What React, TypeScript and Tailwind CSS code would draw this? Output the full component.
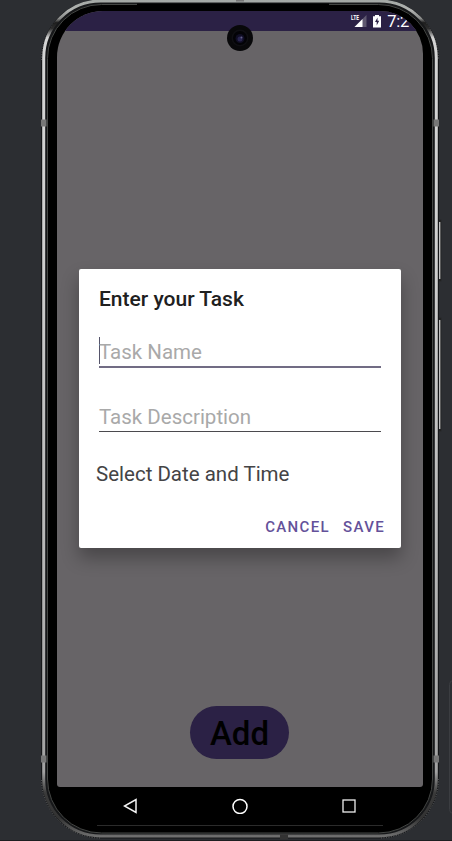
function DeviceFrame() {
  return (
    <svg className="absolute inset-0" width="452" height="841" viewBox="0 0 452 841" fill="none">
      <defs>
        <linearGradient id="rim" x1="0" y1="0" x2="0" y2="839" gradientUnits="userSpaceOnUse">
          <stop offset="0" stopColor="#a3a8a5" />
          <stop offset="0.012" stopColor="#b0b2b0" />
          <stop offset="0.022" stopColor="#8a8b8a" />
          <stop offset="0.027" stopColor="#1e1e1e" />
          <stop offset="0.034" stopColor="#2e2e2e" />
          <stop offset="0.045" stopColor="#d4d4d4" />
          <stop offset="0.3" stopColor="#cfcfcf" />
          <stop offset="0.65" stopColor="#b8b8b8" />
          <stop offset="0.92" stopColor="#a2a2a2" />
          <stop offset="0.945" stopColor="#3a3a3a" />
          <stop offset="0.975" stopColor="#333333" />
          <stop offset="1" stopColor="#777777" />
        </linearGradient>
      </defs>
      <rect x="41" y="-0.5" width="398" height="839" rx="60" fill="#17181a" />
      <path
        d="M41.500 60A59.500 59.500 0 0 1 100 .5M380 .5A59 59 0 0 1 438.500 60M438.500 779A59 59 0 0 1 380 838M100 838A59 59 0 0 1 41.500 779"
        stroke="#66686a"
        strokeDasharray="1 1.500"
      />
      <rect x="43.700" y="1" width="392.600" height="835" rx="57" stroke="url(#rim)" strokeWidth="3" />
      <rect x="47.500" y="4.500" width="385" height="828.500" rx="54" fill="#000" stroke="#444644" />
      <path d="M137 4.500h192" stroke="#000" strokeWidth="2" />
      <path d="M41 123h5.500M433.500 123h5.500M41 759h5.500M433.500 759h5.500" stroke="#777" strokeWidth="7" />
      <path d="M236 .5h8" stroke="#777" strokeWidth="2" />
      <path d="M280 837h8" stroke="#333" strokeWidth="5" />
      <path d="M97 825.500h286" stroke="#2b2b2b" />
      <path d="M439 220.500h1.500v60H439M439 318.500h1.500v112H439" stroke="#222" strokeWidth="1.600" />
      <path d="M439.700 222v57M439.700 320v109" stroke="#c8c8c8" strokeWidth="1.300" />
      <rect x="449.500" y="680.500" width="20" height="133" rx="4" stroke="#3b3d41" />
      <path d="M0 840.500h452" stroke="#1d1e20" />
    </svg>
  );
}

function Camera() {
  return (
    <svg className="absolute left-[226px] top-[24px]" width="28" height="28" viewBox="0 0 28 28">
      <circle cx="14" cy="14" r="13" fill="#08080a" />
      <circle cx="14" cy="14" r="8.500" fill="#0f0f13" />
      <circle cx="14" cy="14" r="7" fill="#030306" />
      <circle cx="14" cy="14.500" r="4.500" fill="#100e24" />
      <circle cx="14" cy="15" r="2.500" fill="#292650" />
      <circle cx="15.500" cy="13.500" r="1" fill="#62608a" />
    </svg>
  );
}

function StatusBar() {
  return (
    <div className="flex h-5 shrink-0 items-center justify-end bg-[#2b2145] pr-[14px]">
      <svg width="32" height="20" viewBox="0 0 32 20" className="mr-[5px]">
        <path d="M16.500 4v12h-12z" fill="#5f5870" />
        <path d="M12.500 8v8h-8z" fill="#fff" />
        <text x="1" y="9" fontSize="7.500" fontWeight="700" fill="#fff" textLength="8" lengthAdjust="spacingAndGlyphs" fontFamily="Roboto, sans-serif">LTE</text>
        <path d="M25 4h4v1.200h2V16.500h-8V5.200h2z" fill="#fff" />
        <path d="M27.500 6.500l-2.500 4.500h1.700v3.500l2.500-4.700h-1.700z" fill="#2b2145" />
      </svg>
      <span className="whitespace-nowrap pt-0.5 text-[16.500px] leading-[22px] tracking-[-0.300px] text-white">7:2</span>
    </div>
  );
}

function Field({ label, focused = false }: { label: string; focused?: boolean }) {
  return (
    <div
      className={
        focused
          ? "mx-5 flex h-[31px] items-start border-b-2 border-[#716c84]"
          : "mx-5 mt-[36px] flex h-[28px] items-start border-b border-[#4b4a4e]"
      }
    >
      {focused && <span className="-mr-px h-[27px] w-px bg-[#55546a]" />}
      <span className={focused ? "pt-px text-[20.500px] leading-[29px] text-[#a9a9a9]" : "text-[20.500px] leading-[27px] text-[#a9a9a9]"}>
        {label}
      </span>
    </div>
  );
}

function TaskDialog() {
  return (
    <div className="mx-[22px] flex h-[279px] shrink-0 flex-col rounded-[2px] bg-white shadow-[0_10px_18px_0_rgba(0,0,0,0.3)]">
      <h1 className="ml-5 mt-[15px] text-[21px] font-medium leading-[30px] text-[#202020]">Enter your Task</h1>
      <div className="h-[23px]" />
      <Field label="Task Name" focused />
      <Field label="Task Description" />
      <p className="ml-[17px] mt-[27px] text-[20.500px] leading-[30px] text-[#444446]">Select Date and Time</p>
      <div className="mr-[16px] mt-[28px] flex justify-end gap-[13px] text-[15px] font-medium leading-5 tracking-[1.350px] text-[#64519a]">
        <button>CANCEL</button>
        <button>SAVE</button>
      </div>
    </div>
  );
}

function NavBar() {
  return (
    <div className="flex h-[38px] items-center justify-between pl-[66px] pr-[67px]">
      <svg width="15" height="18" viewBox="0 0 15 18" fill="none" stroke="#f4f4f4" strokeWidth="1.500">
        <path d="M13 2.500v13L1.500 9z" />
      </svg>
      <svg width="16" height="16" viewBox="0 0 16 16" fill="none" stroke="#fff" strokeWidth="1.500">
        <circle cx="8" cy="8.500" r="7" />
      </svg>
      <svg width="14" height="14" viewBox="0 0 14 14" fill="none" stroke="#eee" strokeWidth="1.300">
        <rect x="1" y="1" width="12" height="12" />
      </svg>
    </div>
  );
}

export default function App() {
  return (
    <div className="relative h-[841px] w-[452px] overflow-hidden bg-[#2c2e32] pl-[57px] pt-[11px] font-['Roboto',sans-serif]">
      <DeviceFrame />
      <div className="relative w-[366px]">
        <div className="flex h-[776px] flex-col overflow-hidden rounded-b-[3px] rounded-tl-[46px] rounded-tr-[43px] bg-[#676467]">
          <StatusBar />
          <div className="h-[238px] shrink-0" />
          <TaskDialog />
          <div className="mt-[158px] flex justify-center pr-px">
            <button className="h-[53px] w-[99px] rounded-full bg-[#2b2145] pt-px text-[33px] font-medium leading-[53px] text-black">Add</button>
          </div>
        </div>
        <NavBar />
      </div>
      <Camera />
    </div>
  );
}
